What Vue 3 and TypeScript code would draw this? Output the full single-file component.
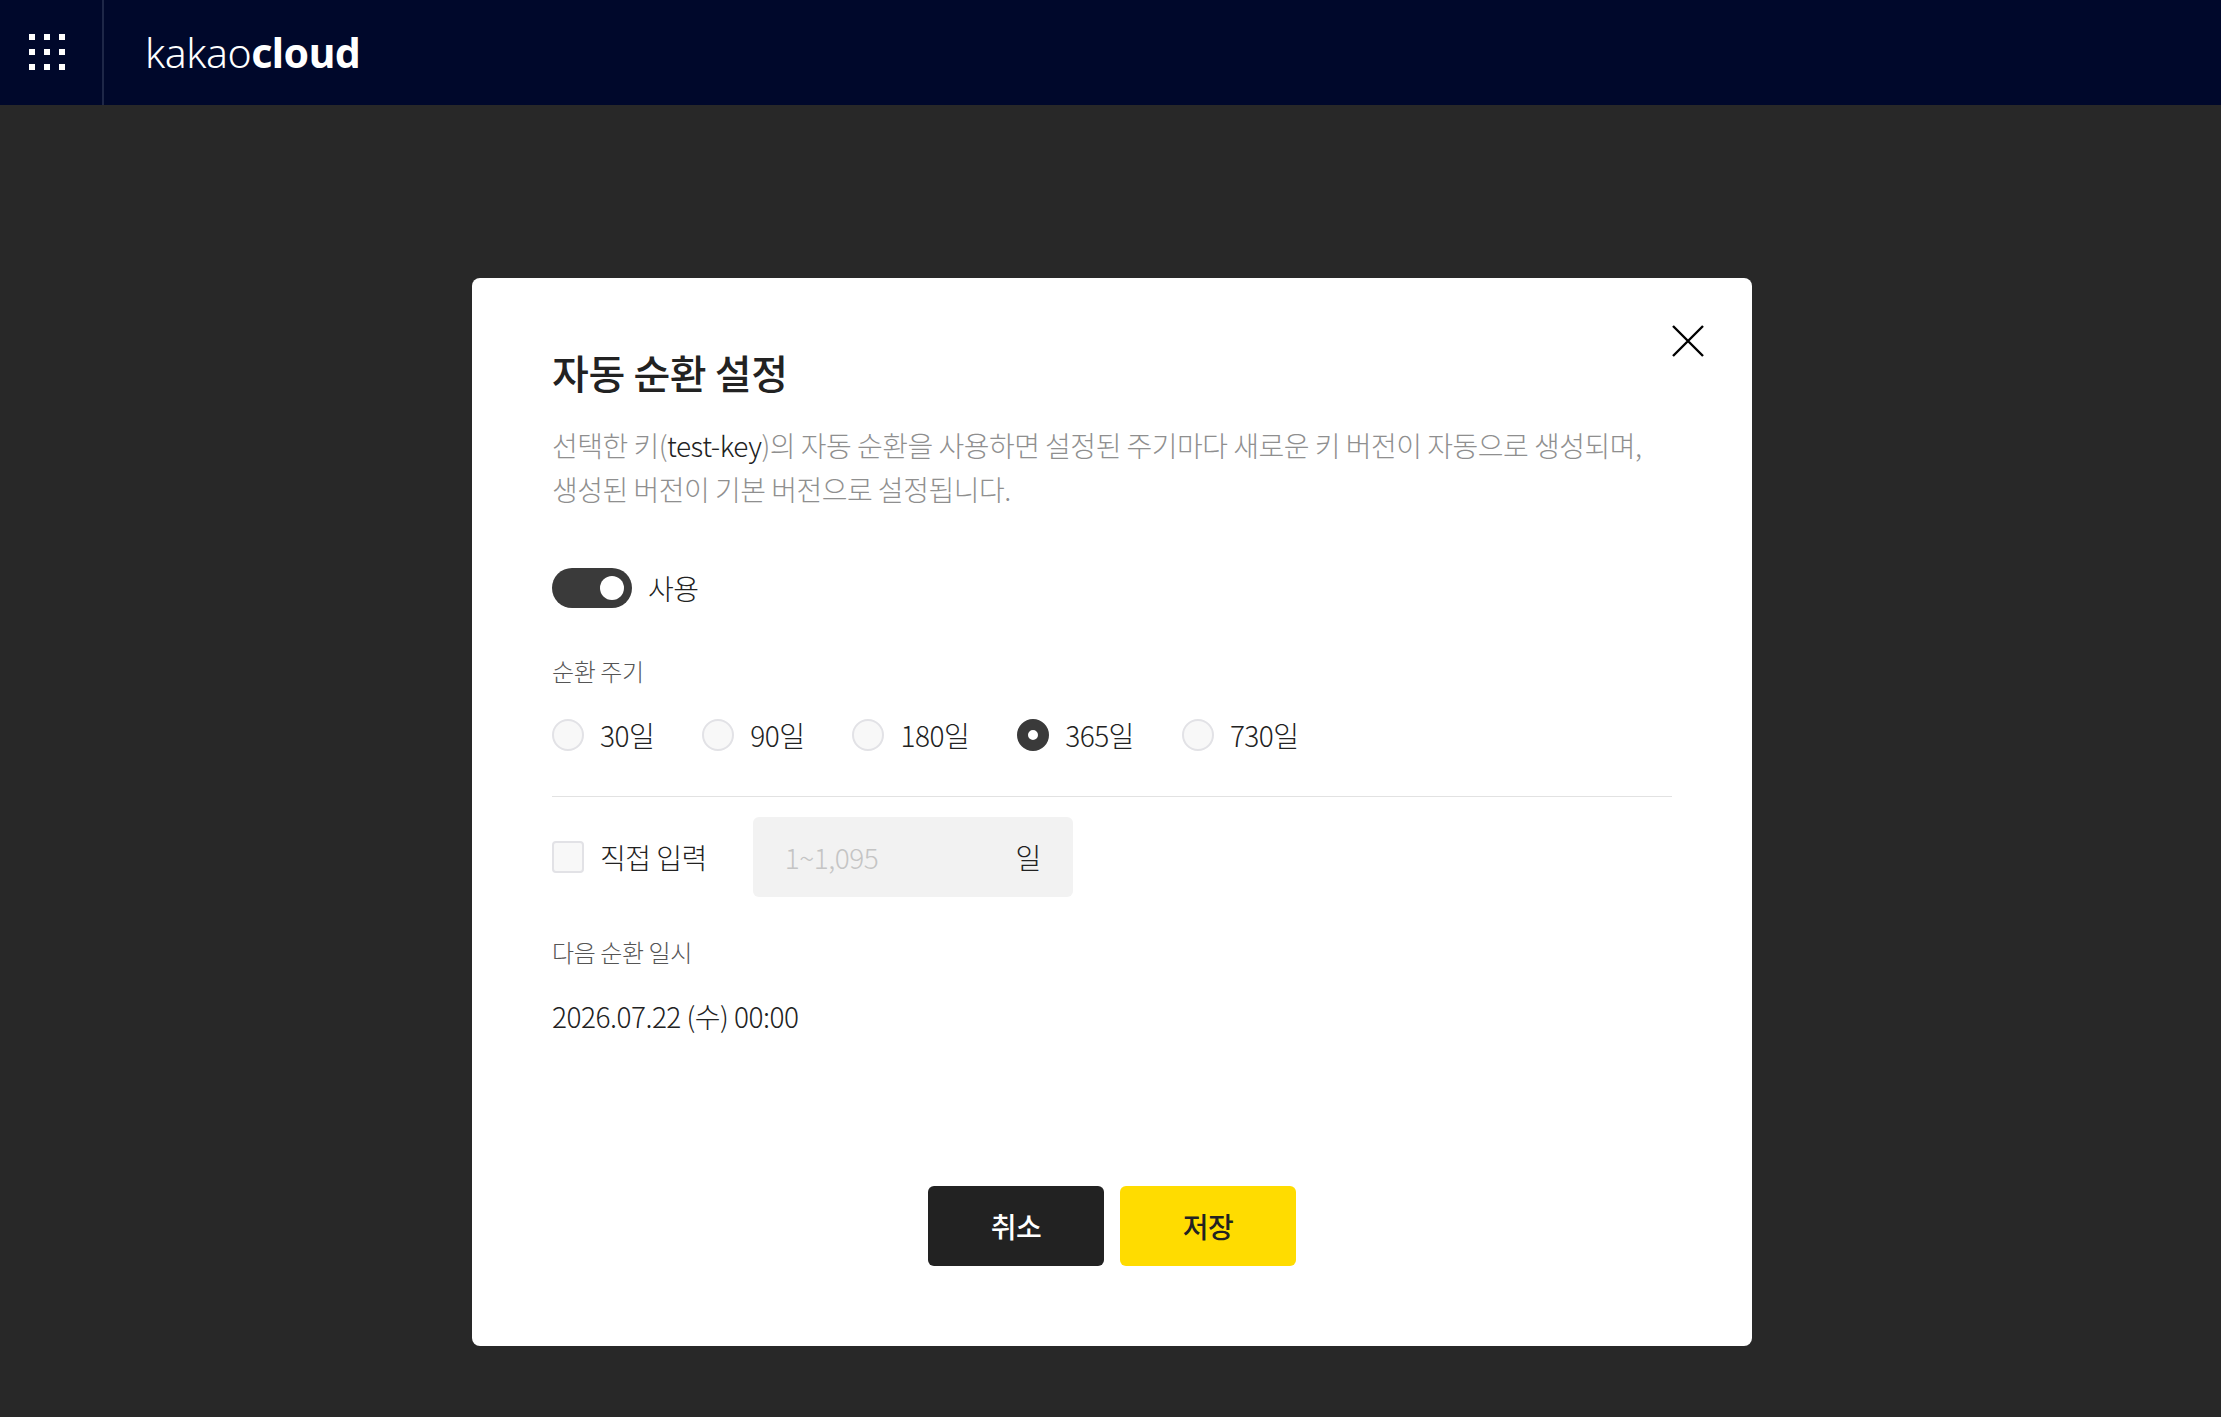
<script setup lang="ts">
import { ref } from 'vue'

const periods = [30, 90, 180, 365, 730]
const period = ref(365)
</script>

<template>
  <div class="page">
    <header class="topbar">
      <button class="menu" aria-label="메뉴">
        <svg width="36" height="36" viewBox="0 0 36 36" fill="#fff" aria-hidden="true">
          <template v-for="y in [0, 15, 30]" :key="y">
            <rect v-for="x in [0, 15, 30]" :key="x" :x="x" :y="y" width="6" height="6" />
          </template>
        </svg>
      </button>
      <div class="logo">kakao<b>cloud</b></div>
    </header>

    <main class="stage">
      <section class="modal">
        <button class="close" aria-label="닫기">
          <svg width="32" height="32" viewBox="0 0 32 32" fill="none" stroke="#000" stroke-width="2.4" aria-hidden="true">
            <path d="M1 1l30 30M31 1L1 31" />
          </svg>
        </button>

        <h2 class="title">자동 순환 설정</h2>
        <p class="desc">
          선택한 키(<span class="key">test-key</span>)의 자동 순환을 사용하면 설정된 주기마다 새로운 키 버전이 자동으로 생성되며, 생성된 버전이 기본 버전으로 설정됩니다.
        </p>

        <div class="toggle-row">
          <span class="toggle"><span class="knob"></span></span>
          <span class="text">사용</span>
        </div>

        <div class="label period-label">순환 주기</div>
        <div class="radios">
          <label v-for="p in periods" :key="p" class="radio-item" @click="period = p">
            <span class="radio" :class="{ on: period === p }"></span>
            <span class="text">{{ p }}일</span>
          </label>
        </div>

        <div class="direct">
          <label class="check-item">
            <span class="check"></span>
            <span class="text">직접 입력</span>
          </label>
          <div class="field">
            <span class="placeholder">1~1,095</span>
            <span class="text">일</span>
          </div>
        </div>

        <div class="label next-label">다음 순환 일시</div>
        <div class="text next-date">2026.07.22 (수) 00:00</div>

        <div class="actions">
          <button class="btn cancel">취소</button>
          <button class="btn save">저장</button>
        </div>
      </section>
    </main>
  </div>
</template>

<style>
html,
body {
  margin: 0;
  background: #282828;
}
</style>

<style scoped>
.page {
  min-height: 1417px;
  background: #282828;
  font-family: "Noto Sans CJK KR", "Noto Sans", sans-serif;
  color: #222;
}

.topbar {
  display: flex;
  align-items: center;
  height: 105px;
  background: #00082b;
}

.menu {
  display: flex;
  align-items: center;
  justify-content: center;
  width: 104px;
  height: 105px;
  padding: 0 8px 2px 0;
  border: 0;
  border-right: 2px solid #1e2747;
  background: none;
  box-sizing: border-box;
}

.logo {
  margin-left: 41px;
  font-family: "Noto Sans", sans-serif;
  font-size: 41px;
  font-weight: 300;
  line-height: 105px;
  color: #fff;
  letter-spacing: -0.5px;
}

.logo b {
  font-weight: 700;
}

.stage {
  display: flex;
  justify-content: center;
  padding: 173px 0 0 3px;
}

.modal {
  position: relative;
  display: flex;
  flex-direction: column;
  width: 1280px;
  height: 1068px;
  padding: 0 80px;
  background: #fff;
  border-radius: 8px;
  box-sizing: border-box;
}

.close {
  position: absolute;
  top: 47px;
  right: 48px;
  width: 32px;
  height: 32px;
  padding: 0;
  border: 0;
  background: none;
}

.title {
  margin: 66px 0 0;
  font-size: 40px;
  font-weight: 500;
  line-height: 56px;
  letter-spacing: -0.4px;
}

.desc {
  margin: 23px 0 0;
  font-size: 28px;
  font-weight: 300;
  line-height: 44px;
  letter-spacing: -0.5px;
  color: #8f8f8f;
}

.key {
  color: #222;
}

.text {
  font-size: 28px;
  font-weight: 300;
  line-height: 40px;
  letter-spacing: -0.5px;
  color: #222;
}

.toggle-row {
  display: flex;
  align-items: center;
  gap: 16px;
  margin-top: 57px;
}

.toggle {
  position: relative;
  width: 80px;
  height: 40px;
  border-radius: 20px;
  background: #3a3a3a;
}

.knob {
  position: absolute;
  top: 8px;
  right: 8px;
  width: 24px;
  height: 24px;
  border-radius: 50%;
  background: #fff;
}

.label {
  font-size: 24px;
  font-weight: 300;
  line-height: 36px;
  letter-spacing: -0.4px;
  color: #555;
}

.period-label {
  margin-top: 45px;
}

.radios {
  display: flex;
  gap: 48px;
  margin-top: 26px;
  padding-bottom: 41px;
  border-bottom: 1px solid #e2e2e2;
}

.radio-item,
.check-item {
  display: flex;
  align-items: center;
  gap: 16px;
}

.radio {
  width: 32px;
  height: 32px;
  border: 2px solid #e2e2e6;
  border-radius: 50%;
  background: #f8f8f8;
  box-sizing: border-box;
}

.radio.on {
  border: 11px solid #3a3a3a;
  background: #fff;
}

.direct {
  display: flex;
  align-items: center;
  gap: 46px;
  margin-top: 20px;
}

.check {
  width: 32px;
  height: 32px;
  border: 2px solid #e2e2e6;
  border-radius: 4px;
  background: #f8f8f8;
  box-sizing: border-box;
}

.field {
  display: flex;
  align-items: center;
  justify-content: space-between;
  width: 320px;
  height: 80px;
  padding: 0 32px;
  background: #f2f2f2;
  border-radius: 6px;
  box-sizing: border-box;
}

.placeholder {
  font-size: 28px;
  font-weight: 300;
  letter-spacing: -0.5px;
  color: #c4c4c4;
}

.next-label {
  margin-top: 37px;
}

.next-date {
  margin-top: 26px;
}

.actions {
  display: flex;
  justify-content: center;
  gap: 16px;
  margin-top: auto;
  margin-bottom: 80px;
}

.btn {
  width: 176px;
  height: 80px;
  border: 0;
  border-radius: 6px;
  font-family: inherit;
  font-size: 28px;
  font-weight: 500;
  letter-spacing: -0.5px;
}

.cancel {
  background: #222;
  color: #fff;
}

.save {
  background: #ffdc00;
  color: #222;
}
</style>
